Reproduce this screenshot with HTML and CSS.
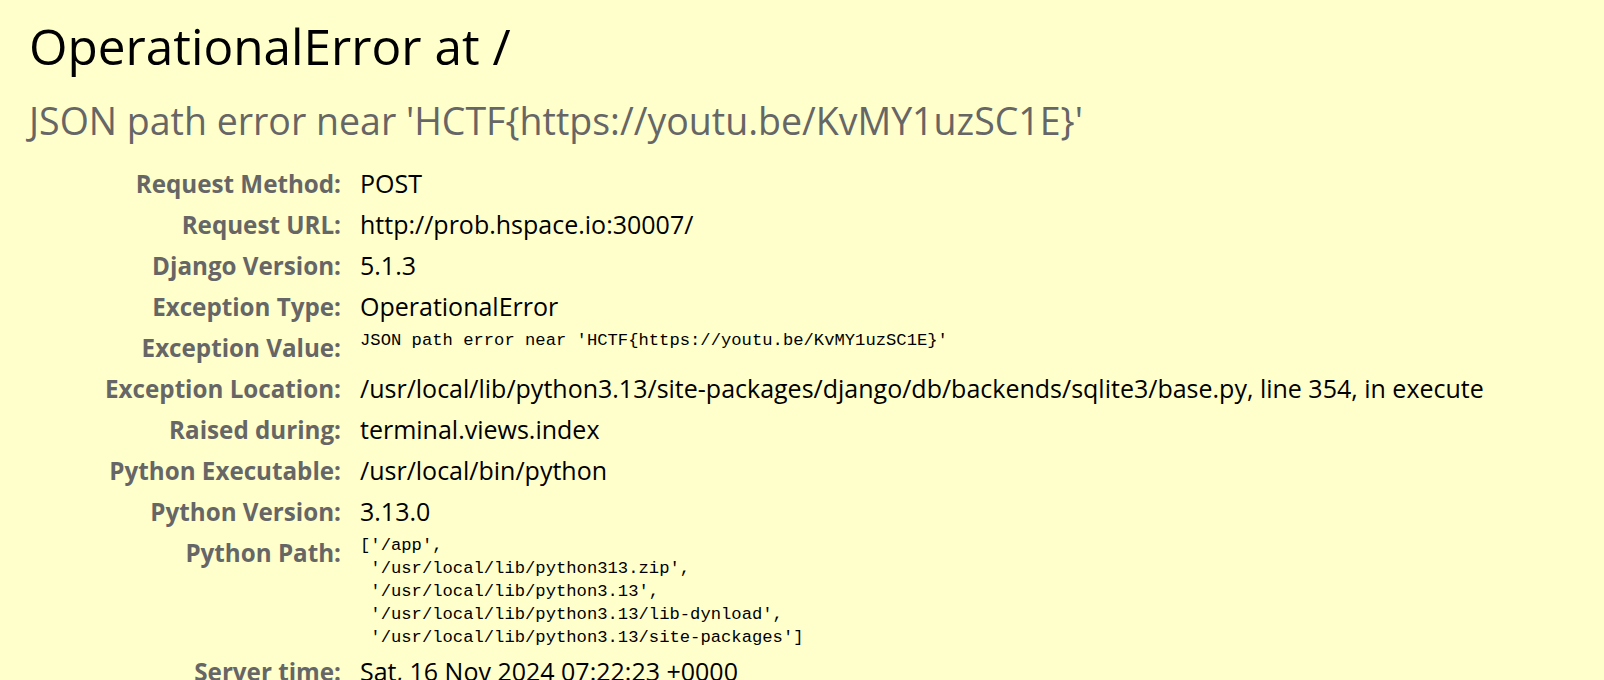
FILE: index.html
```html
<!DOCTYPE html>
<html lang="en">
<head>
    <meta charset="utf-8">
    <title>OperationalError at /</title>
    <link rel="stylesheet" href="styles.css">
</head>
<body>
    <header id="summary">
        <h1>OperationalError at /</h1>
        <h2 class="exception_value">JSON path error near 'HCTF{https://youtu.be/KvMY1uzSC1E}'</h2>
        <table class="meta">
            <tr>
                <th>Request Method:</th>
                <td>POST</td>
            </tr>
            <tr>
                <th>Request URL:</th>
                <td>http://prob.hspace.io:30007/</td>
            </tr>
            <tr>
                <th>Django Version:</th>
                <td>5.1.3</td>
            </tr>
            <tr>
                <th>Exception Type:</th>
                <td>OperationalError</td>
            </tr>
            <tr>
                <th>Exception Value:</th>
                <td><pre>JSON path error near 'HCTF{https://youtu.be/KvMY1uzSC1E}'</pre></td>
            </tr>
            <tr>
                <th>Exception Location:</th>
                <td><span class="fname">/usr/local/lib/python3.13/site-packages/django/db/backends/sqlite3/base.py</span>, line 354, in execute</td>
            </tr>
            <tr>
                <th>Raised during:</th>
                <td>terminal.views.index</td>
            </tr>
            <tr>
                <th>Python Executable:</th>
                <td>/usr/local/bin/python</td>
            </tr>
            <tr>
                <th>Python Version:</th>
                <td>3.13.0</td>
            </tr>
            <tr>
                <th>Python Path:</th>
                <td><pre>['/app',
 '/usr/local/lib/python313.zip',
 '/usr/local/lib/python3.13',
 '/usr/local/lib/python3.13/lib-dynload',
 '/usr/local/lib/python3.13/site-packages']</pre></td>
            </tr>
            <tr>
                <th>Server time:</th>
                <td>Sat, 16 Nov 2024 07:22:23 +0000</td>
            </tr>
        </table>
    </header>
</body>
</html>
```

FILE: styles.css
```css
html * {
    padding: 0;
    margin: 0;
}

body {
    font-family: "Open Sans", "Noto Sans", sans-serif;
    background: #ffffcc;
    color: #000;
}

#summary {
    background: #ffffcc;
    padding: 18px 29px 40px;
}

h1 {
    font-size: 49.5px;
    font-weight: normal;
    line-height: 56px;
    margin-bottom: 26px;
}

/* error message under the title */
#summary h2 {
    font-size: 37.5px;
    font-weight: normal;
    line-height: 42px;
    color: #666;
    margin-bottom: 21px;
}

table.meta {
    border: none;
    border-collapse: collapse;
}

table.meta th,
table.meta td {
    vertical-align: top;
    line-height: 37px;
}

table.meta th {
    width: 312px;
    padding: 2px 13px 2px 0;
    text-align: right;
    color: #666;
    font-size: 24.2px;
    font-weight: bold;
}

table.meta td {
    padding: 2px 6px;
    font-size: 25px;
}

table.meta pre {
    font-family: "Liberation Mono", "DejaVu Sans Mono", monospace;
    font-size: 17.2px;
    line-height: 23px;
    white-space: pre-wrap;
}
```
